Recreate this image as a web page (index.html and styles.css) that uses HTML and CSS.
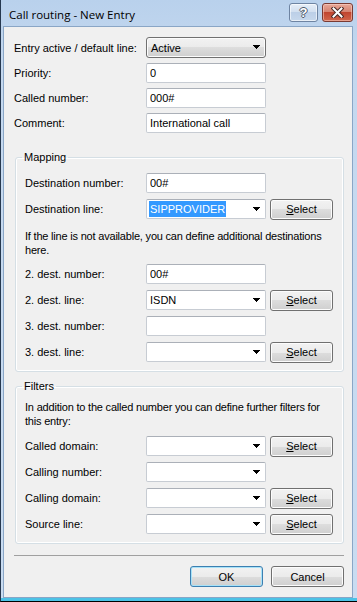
FILE: index.html
```html
<!DOCTYPE html>
<html lang="en">
<head>
    <meta charset="UTF-8">
    <title>Call routing - New Entry</title>
    <link rel="stylesheet" href="styles.css">
</head>
<body>

    <div class="window">

        <!-- Title bar -->
        <div class="titlebar">
            <span class="title">Call routing - New Entry</span>
            <div class="caption-buttons">
                <span class="cap-btn help">?</span>
                <span class="cap-btn close">
                    <svg width="13" height="11" viewBox="0 0 13 11">
                        <path d="M2.5 1.5 L10.5 9.5 M10.5 1.5 L2.5 9.5" stroke="#4a2a26" stroke-width="4" stroke-linecap="square"/>
                        <path d="M2.5 1.5 L10.5 9.5 M10.5 1.5 L2.5 9.5" stroke="#ffffff" stroke-width="2" stroke-linecap="square"/>
                    </svg>
                </span>
            </div>
        </div>

        <div class="client">

            <!-- General settings -->
            <div class="form-grid top">
                <label>Entry active / default line:</label>
                <div class="dropdown">
                    <span>Active</span>
                    <svg class="arrow" width="7" height="4" viewBox="0 0 7 4"><polygon points="0,0 7,0 3.5,4" fill="#000"/></svg>
                </div>

                <label>Priority:</label>
                <input class="field" type="text" value="0">

                <label>Called number:</label>
                <input class="field" type="text" value="000#">

                <label>Comment:</label>
                <input class="field" type="text" value="International call">
            </div>

            <!-- Mapping -->
            <fieldset class="group">
                <legend>Mapping</legend>
                <div class="form-grid">
                    <label>Destination number:</label>
                    <input class="field" type="text" value="00#">
                    <span></span>

                    <label>Destination line:</label>
                    <div class="combo">
                        <span class="selected">SIPPROVIDER</span>
                        <svg class="arrow" width="7" height="4" viewBox="0 0 7 4"><polygon points="0,0 7,0 3.5,4" fill="#000"/></svg>
                    </div>
                    <button class="btn"><u>S</u>elect</button>

                    <p class="note">If the line is not available, you can define additional destinations here.</p>

                    <label>2. dest. number:</label>
                    <input class="field" type="text" value="00#">
                    <span></span>

                    <label>2. dest. line:</label>
                    <div class="combo">
                        <span>ISDN</span>
                        <svg class="arrow" width="7" height="4" viewBox="0 0 7 4"><polygon points="0,0 7,0 3.5,4" fill="#000"/></svg>
                    </div>
                    <button class="btn"><u>S</u>elect</button>

                    <label>3. dest. number:</label>
                    <input class="field" type="text" value="">
                    <span></span>

                    <label>3. dest. line:</label>
                    <div class="combo">
                        <span></span>
                        <svg class="arrow" width="7" height="4" viewBox="0 0 7 4"><polygon points="0,0 7,0 3.5,4" fill="#000"/></svg>
                    </div>
                    <button class="btn"><u>S</u>elect</button>
                </div>
            </fieldset>

            <!-- Filters -->
            <fieldset class="group filters">
                <legend>Filters</legend>
                <div class="form-grid">
                    <p class="note">In addition to the called number you can define further filters for this entry:</p>

                    <label>Called domain:</label>
                    <div class="combo">
                        <span></span>
                        <svg class="arrow" width="7" height="4" viewBox="0 0 7 4"><polygon points="0,0 7,0 3.5,4" fill="#000"/></svg>
                    </div>
                    <button class="btn"><u>S</u>elect</button>

                    <label>Calling number:</label>
                    <div class="combo">
                        <span></span>
                        <svg class="arrow" width="7" height="4" viewBox="0 0 7 4"><polygon points="0,0 7,0 3.5,4" fill="#000"/></svg>
                    </div>
                    <span></span>

                    <label>Calling domain:</label>
                    <div class="combo">
                        <span></span>
                        <svg class="arrow" width="7" height="4" viewBox="0 0 7 4"><polygon points="0,0 7,0 3.5,4" fill="#000"/></svg>
                    </div>
                    <button class="btn"><u>S</u>elect</button>

                    <label>Source line:</label>
                    <div class="combo">
                        <span></span>
                        <svg class="arrow" width="7" height="4" viewBox="0 0 7 4"><polygon points="0,0 7,0 3.5,4" fill="#000"/></svg>
                    </div>
                    <button class="btn"><u>S</u>elect</button>
                </div>
            </fieldset>

            <div class="separator"></div>

            <!-- Dialog buttons -->
            <div class="footer">
                <button class="btn default">OK</button>
                <button class="btn">Cancel</button>
            </div>

        </div>
    </div>

</body>
</html>
```

FILE: styles.css
```css
* {
    box-sizing: border-box;
}

body {
    margin: 0;
    font-family: "Liberation Sans", Arial, sans-serif;
    font-size: 11px;
    color: #000;
    background-color: #f0f0f0;
}

/* Window frame */
.window {
    width: 357px;
    height: 602px;
    display: flex;
    flex-direction: column;
    padding: 0 4px 3px 2px;
    border-left: 1px solid #26384f;
    border-bottom: 1px solid #000;
    background: linear-gradient(#b9d1ec, #c4d8ef 60px, #c9dcf1);
    box-shadow: inset 0 -3px 0 #4cc2e6;
}

.titlebar {
    height: 26px;
    flex-shrink: 0;
    display: flex;
    align-items: flex-start;
    justify-content: space-between;
    padding-left: 6px;
}

.title {
    font-family: "Open Sans", "Liberation Sans", sans-serif;
    font-size: 11.5px;
    line-height: 16px;
    margin-top: 7px;
}

.caption-buttons {
    display: flex;
    gap: 4px;
    margin-top: 3px;
}

.cap-btn {
    height: 19px;
    border-radius: 3px;
    display: flex;
    align-items: center;
    justify-content: center;
}

.help {
    width: 29px;
    border: 1px solid #6e84a2;
    background: linear-gradient(#e6eef8, #d0deef 50%, #bccfe7 50%, #c7d8ec);
    box-shadow: inset 0 0 0 1px rgba(255, 255, 255, 0.6);
    color: #fff;
    font-weight: bold;
    font-size: 13px;
    text-shadow: -1px 0 #4e5b6c, 1px 0 #4e5b6c, 0 -1px #4e5b6c, 0 1px #4e5b6c;
}

.close {
    width: 31px;
    border: 1px solid #7a3a32;
    background: linear-gradient(#e8a898, #d47f6c 50%, #c0452f 50%, #d2664b);
    box-shadow: inset 0 0 0 1px rgba(255, 220, 210, 0.5);
}

/* Client area */
.client {
    flex: 1;
    background-color: #f0f0f0;
    border: 1px solid #8aa6c6;
    padding: 10px 8px 0 10px;
    display: flex;
    flex-direction: column;
}

.form-grid {
    display: grid;
    grid-template-columns: 117px 120px 63px;
    grid-auto-rows: 20px;
    column-gap: 4px;
    row-gap: 6px;
    align-items: center;
}

.form-grid.top {
    grid-template-columns: 132px 120px;
    grid-template-rows: 21px 20px 20px 20px;
    row-gap: 5px;
    column-gap: 0;
}

label {
    white-space: nowrap;
}

.field {
    height: 20px;
    width: 120px;
    margin: 0;
    padding: 0 3px;
    font: inherit;
    color: #000;
    background-color: #fff;
    border: 1px solid #c7ccd3;
    border-top-color: #abb0b8;
    border-radius: 2px;
    outline: none;
}

.combo {
    height: 20px;
    display: flex;
    align-items: center;
    justify-content: space-between;
    padding: 0 5px 0 2px;
    background-color: #fff;
    border: 1px solid #c7ccd3;
    border-top-color: #abb0b8;
    border-radius: 2px;
}

.combo span {
    padding: 1px 1px;
    line-height: 14px;
}

.combo .selected {
    background-color: #3399ff;
    color: #fff;
}

.dropdown {
    height: 21px;
    display: flex;
    align-items: center;
    justify-content: space-between;
    padding: 0 5px 0 4px;
    border: 1px solid #707070;
    border-radius: 3px;
    background: linear-gradient(#f2f2f2, #ebebeb 50%, #dddddd 50%, #cfcfcf);
    box-shadow: inset 0 0 0 1px #fcfcfc;
}

.arrow {
    display: block;
    flex-shrink: 0;
    margin-top: -1px;
    shape-rendering: crispEdges;
}

.note {
    grid-column: 1 / -1;
    margin: 4px 0 1px;
    line-height: 14px;
    letter-spacing: -0.2px;
    align-self: start;
}

/* Group boxes */
.group {
    margin: 17px 0 0 1px;
    padding: 9px;
    min-width: 0;
    border: 1px solid #d5dfe5;
    border-radius: 3px;
    box-shadow: inset 0 0 0 1px #fff;
}

.group .form-grid {
    grid-template-rows: 20px 20px auto 20px 20px 20px 20px;
}

.filters {
    margin-top: 7px;
    padding-top: 7px;
}

.filters .form-grid {
    grid-template-rows: auto 20px 20px 20px 20px;
}

.filters .note {
    margin: 0 0 2px;
}

legend {
    padding: 0 2px;
    margin-left: -3px;
    line-height: 14px;
}

/* Buttons */
.btn {
    height: 21px;
    margin: 0;
    padding: 0;
    font: inherit;
    color: #000;
    border: 1px solid #707070;
    border-radius: 3px;
    background: linear-gradient(#f2f2f2, #ebebeb 50%, #dddddd 50%, #cfcfcf);
    box-shadow: inset 0 0 0 1px #fcfcfc;
}

.btn.default {
    border-color: #3c7fb1;
    box-shadow: inset 0 0 0 1px #a7e2f8;
}

.separator {
    margin-top: 11px;
    height: 1px;
    background-color: #a0a0a0;
}

.footer {
    display: flex;
    justify-content: flex-end;
    gap: 8px;
    margin-top: 10px;
}

.footer .btn {
    width: 73px;
}
```
